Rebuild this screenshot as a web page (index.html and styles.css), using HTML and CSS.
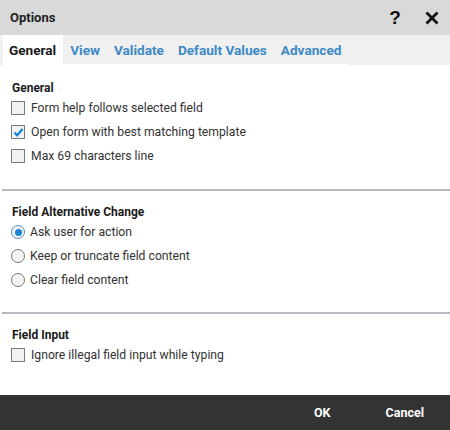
FILE: index.html
```html
<!DOCTYPE html>
<html>
<head>
<meta charset="utf-8">
<link rel="stylesheet" href="styles.css">
</head>
<body>
<div class="dialog">
  <div class="titlebar">
    <span class="title">Options</span>
    <span class="tb-btn help">?</span>
    <span class="tb-btn close">
      <svg width="14" height="14" viewBox="0 0 14 14"><path d="M2.5 2.5 L11.5 11.5 M11.5 2.5 L2.5 11.5" stroke="#111" stroke-width="2.8" stroke-linecap="square"/></svg>
    </span>
  </div>
  <div class="tabs">
    <div class="tab active">General</div>
    <div class="tab">View</div>
    <div class="tab">Validate</div>
    <div class="tab">Default Values</div>
    <div class="tab">Advanced</div>
  </div>
  <div class="content">
    <section class="group">
      <h3 class="group-title">General</h3>
      <label class="opt"><span class="cb"></span>Form help follows selected field</label>
      <label class="opt"><span class="cb checked"><svg width="11" height="11" viewBox="0 0 11 11"><path d="M1.5 5.5 L4.2 8.2 L9.5 2" fill="none" stroke="#1a87d6" stroke-width="2.4"/></svg></span>Open form with best matching template</label>
      <label class="opt"><span class="cb"></span>Max 69 characters line</label>
    </section>
    <hr class="sep">
    <section class="group">
      <h3 class="group-title">Field Alternative Change</h3>
      <label class="opt"><span class="rb checked"></span>Ask user for action</label>
      <label class="opt"><span class="rb"></span>Keep or truncate field content</label>
      <label class="opt"><span class="rb"></span>Clear field content</label>
    </section>
    <hr class="sep sep2">
    <section class="group">
      <h3 class="group-title">Field Input</h3>
      <label class="opt"><span class="cb"></span>Ignore illegal field input while typing</label>
    </section>
  </div>
  <div class="footer">
    <span class="fbtn">OK</span>
    <span class="fbtn">Cancel</span>
  </div>
</div>
</body>
</html>
```

FILE: styles.css
```css
* { box-sizing: border-box; }
html, body { margin: 0; padding: 0; }
body {
  width: 450px;
  height: 430px;
  font-family: Roboto, "Liberation Sans", sans-serif;
  background: #fff;
  overflow: hidden;
}
.dialog {
  display: flex;
  flex-direction: column;
  height: 430px;
}
.titlebar {
  height: 35px;
  background: #d9d9d9;
  display: flex;
  align-items: center;
  padding: 0 11px 0 10px;
}
.title {
  font-weight: bold;
  font-size: 13px;
  color: #222;
  flex: 1;
}
.tb-btn {
  display: flex;
  align-items: center;
  justify-content: center;
}
.help {
  font-family: "Liberation Sans", sans-serif;
  font-weight: bold;
  font-size: 19px;
  color: #111;
  width: 12px;
  margin-right: 24px;
}
.close { width: 14px; }
.tabs {
  height: 30px;
  background: #f0f0f0;
  display: flex;
  align-items: stretch;
  padding-left: 3px;
}
.tab {
  padding: 0 7px;
  display: flex;
  align-items: center;
  font-weight: bold;
  font-size: 13.6px;
  color: #3d8ac6;
  border-bottom: 1px solid #fff;
}
.tab.active {
  background: #fff;
  color: #1a1a1a;
  padding: 0 7px 0 6px;
}
.content {
  flex: 1;
  padding-top: 16px;
}
.group { padding: 0 11px; }
.group-title {
  margin: 0 0 0 1px;
  font-size: 12px;
  font-weight: bold;
  color: #1a1a1a;
  line-height: 15px;
}
.opt {
  display: flex;
  align-items: center;
  height: 24px;
  font-size: 12.2px;
  color: #333;
}
.cb {
  width: 14px;
  height: 14px;
  border: 1px solid #7a7a7a;
  background: #f2f2f2;
  margin-right: 6px;
  display: flex;
  align-items: center;
  justify-content: center;
}
.rb {
  width: 14px;
  height: 14px;
  border: 1px solid #7a7a7a;
  background: #f2f2f2;
  border-radius: 50%;
  margin-right: 5px;
  display: flex;
  align-items: center;
  justify-content: center;
}
.rb.checked::after {
  content: "";
  width: 7px;
  height: 7px;
  border-radius: 50%;
  background: #1a87d6;
}
.rb.checked { border-color: #5a8fc0; }
.sep {
  border: 0;
  border-top: 2px solid #b9b9c2;
  margin: 21px 0 14px 2px;
}
.sep2 { margin-top: 20px; }
.footer {
  height: 35px;
  background: #333;
  display: flex;
  align-items: center;
  justify-content: flex-end;
  padding-right: 26px;
}
.fbtn {
  color: #fff;
  font-weight: bold;
  font-size: 12.5px;
  margin-left: 55px;
}
```
